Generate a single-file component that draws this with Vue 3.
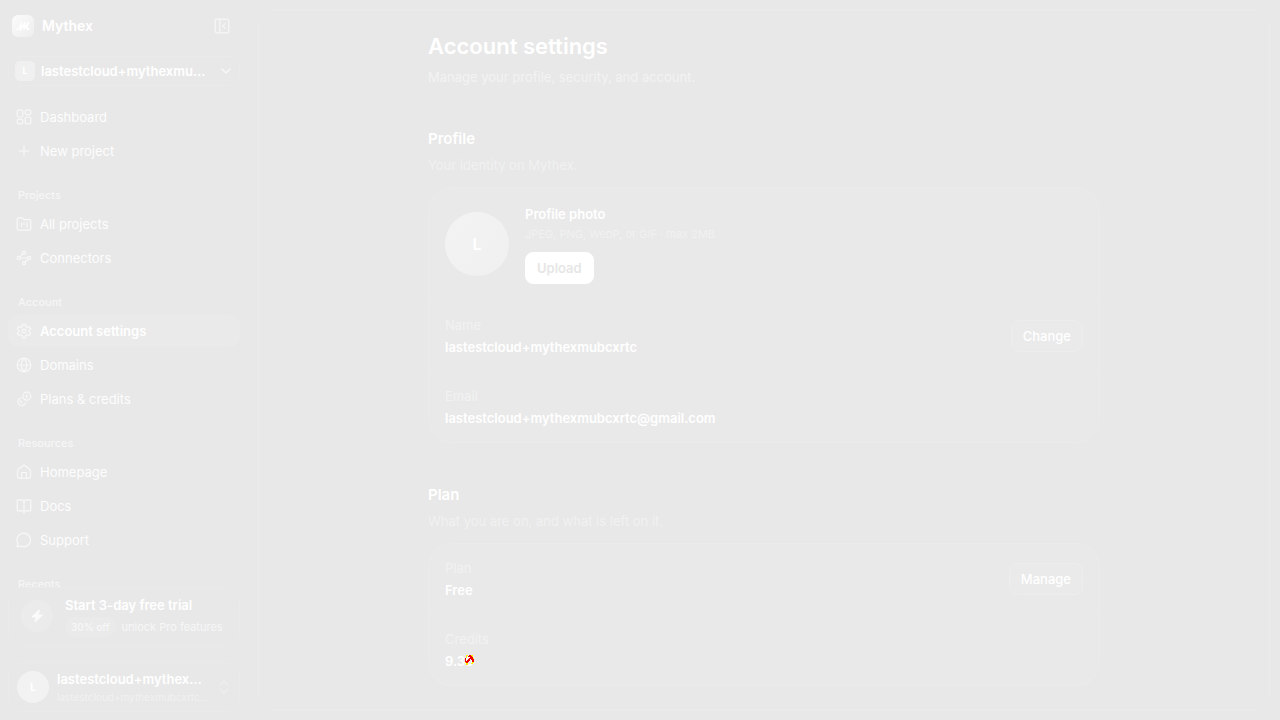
<script setup>
import { ref } from 'vue'

const userName = 'lastestcloud+mythexmubcxrtc'
const userEmail = 'lastestcloud+mythexmubcxrtc@gmail.com'
const current = ref('Account settings')

// Each icon is a list of stroke paths, drawn between 1 and 23 on both axes
const sections = [
  {
    title: '',
    items: [
      {
        label: 'Dashboard',
        icon: [
          'M3 1h5a2 2 0 0 1 2 2v7a2 2 0 0 1-2 2H3a2 2 0 0 1-2-2V3a2 2 0 0 1 2-2z',
          'M16 1h5a2 2 0 0 1 2 2v3a2 2 0 0 1-2 2h-5a2 2 0 0 1-2-2V3a2 2 0 0 1 2-2z',
          'M16 12h5a2 2 0 0 1 2 2v7a2 2 0 0 1-2 2h-5a2 2 0 0 1-2-2v-7a2 2 0 0 1 2-2z',
          'M3 16h5a2 2 0 0 1 2 2v3a2 2 0 0 1-2 2H3a2 2 0 0 1-2-2v-3a2 2 0 0 1 2-2z',
        ],
      },
      { label: 'New project', icon: ['M12 4v16', 'M4 12h16'] },
    ],
  },
  {
    title: 'Projects',
    items: [
      {
        label: 'All projects',
        icon: [
          'M3 22h18a2 2 0 0 0 2-2V7a2 2 0 0 0-2-2h-9l-2-3H3a2 2 0 0 0-2 2v16a2 2 0 0 0 2 2z',
          'M8 10v6',
          'M12 10v3',
          'M17 10v7',
        ],
      },
      {
        label: 'Connectors',
        icon: [
          'M12 1a2.500 2.500 0 1 1 0 5a2.500 2.500 0 0 1 0-5z',
          'M10.200 5.300 5 10.200',
          'M3.500 9.500a2.500 2.500 0 1 1 0 5a2.500 2.500 0 0 1 0-5z',
          'M6 12h12',
          'M20.500 9.500a2.500 2.500 0 1 1 0 5a2.500 2.500 0 0 1 0-5z',
          'M19 13.800 13.800 18.700',
          'M12 18a2.500 2.500 0 1 1 0 5a2.500 2.500 0 0 1 0-5z',
        ],
      },
    ],
  },
  {
    title: 'Account',
    items: [
      {
        label: 'Account settings',
        icon: [
          'M10 1h4l1 3.500 2.500 1.500 3.500-1 2 3.500-2.500 2.500v2l2.500 2.500-2 3.500-3.500-1-2.500 1.500-1 3.500h-4l-1-3.500-2.500-1.500-3.500 1-2-3.500L3.500 13v-2L1 8.500 3 5l3.500 1L9 4.500z',
          'M12 9a3 3 0 1 1 0 6a3 3 0 0 1 0-6z',
        ],
      },
      {
        label: 'Domains',
        icon: [
          'M12 1a11 11 0 1 1 0 22a11 11 0 0 1 0-22z',
          'M12 1c-6 6.500-6 15.500 0 22c6-6.500 6-15.500 0-22',
          'M1 12h22',
        ],
      },
      {
        label: 'Plans & credits',
        icon: [
          'M16.500 1a6.500 6.500 0 1 1 0 13a6.500 6.500 0 0 1 0-13z',
          'M6.500 10a6.500 6.500 0 1 0 8.500 8',
          'M15.500 5.500h1v4.500',
          'M6 14.500l2.500 3.500',
        ],
      },
    ],
  },
  {
    title: 'Resources',
    items: [
      {
        label: 'Homepage',
        icon: [
          'M16 22v-8a1 1 0 0 0-1-1H9a1 1 0 0 0-1 1v8',
          'M1.500 10a3 3 0 0 1 1-2l8-6.500a2.500 2.500 0 0 1 3 0l8 6.500a3 3 0 0 1 1 2v10a2 2 0 0 1-2 2h-17a2 2 0 0 1-2-2z',
        ],
      },
      {
        label: 'Docs',
        icon: [
          'M12 6v17',
          'M2 20a1 1 0 0 1-1-1V3a1 1 0 0 1 1-1h6a4 4 0 0 1 4 4 4 4 0 0 1 4-4h6a1 1 0 0 1 1 1v16a1 1 0 0 1-1 1h-7a3 3 0 0 0-3 2 3 3 0 0 0-3-2z',
        ],
      },
      {
        label: 'Support',
        icon: ['M2 17.500a1.500 1.500 0 0 1 0 1L1 22a1 1 0 0 0 1 1l4-1a2 2 0 0 1 1 0A11 11 0 1 0 2 17.500'],
      },
    ],
  },
  { title: 'Recents', items: [] },
]
</script>

<template>
  <div class="app">
    <aside class="sidebar">
      <div class="brand">
        <svg class="logo" viewBox="0 0 22 22">
          <defs>
            <linearGradient id="logoFill" x1="0" y1="0" x2="1" y2="1">
              <stop offset="0" stop-color="#fbfbfb" />
              <stop offset="1" stop-color="#eeeeee" />
            </linearGradient>
          </defs>
          <rect width="22" height="22" rx="6" fill="url(#logoFill)" />
          <path d="M5 14.500c2 0 3-3 4.500-7L8.500 15 13 7.500 12 14l4.500-6.500c-1 2.500-2 6.500-1 7 .5.200 1-.200 1.500-.8" fill="none" stroke="#fff" stroke-width="1.500" stroke-linecap="round" stroke-linejoin="round" />
        </svg>
        <span class="brand-name">Mythex</span>
        <button class="icon-button" type="button" aria-label="Collapse sidebar">
          <svg class="icon" viewBox="0 0 24 24">
            <rect x="3" y="3" width="18" height="18" rx="2" />
            <path d="M9 3v18" />
            <path d="m16 15-3-3 3-3" />
          </svg>
        </button>
      </div>

      <button class="workspace" type="button">
        <span class="workspace-avatar">L</span>
        <span class="workspace-name">{{ userName }}</span>
        <svg class="chevron" viewBox="0 0 24 24"><path d="m4 8 8 8 8-8" /></svg>
      </button>

      <nav class="nav">
        <div v-for="section in sections" :key="section.title" class="nav-section">
          <h3 v-if="section.title" class="nav-title">{{ section.title }}</h3>
          <a
            v-for="item in section.items"
            :key="item.label"
            href="#"
            class="nav-item"
            :class="{ active: item.label === current }"
            @click.prevent="current = item.label"
          >
            <svg class="icon" viewBox="-1 -1 26 26">
              <path v-for="d in item.icon" :key="d" :d="d" />
            </svg>
            <span>{{ item.label }}</span>
          </a>
        </div>
      </nav>

      <button class="promo" type="button">
        <span class="promo-icon">
          <svg viewBox="0 0 16 16"><path d="M9.500 2 2.800 8.200c-.5.500-.2 1.200.5 1.200h3.200L5.300 13.400c-.2.800.5 1.100 1.100.6l7-6.200c.500-.500.200-1.200-.5-1.200H9.800l1.100-3.900c.2-.8-.7-1.300-1.400-.7z" /></svg>
        </span>
        <span class="promo-text">
          <span class="promo-title">Start 3-day free trial</span>
          <span class="promo-line">
            <span class="badge">30% off</span>
            <span>unlock Pro features</span>
          </span>
        </span>
      </button>

      <button class="user" type="button">
        <span class="user-avatar">L</span>
        <span class="user-text">
          <span class="user-name">{{ userName }}</span>
          <span class="user-email">{{ userEmail }}</span>
        </span>
        <svg class="sorter" viewBox="0 0 24 24">
          <path d="m6 8 6-6 6 6" />
          <path d="m6 16 6 6 6-6" />
        </svg>
      </button>
    </aside>

    <main class="panel">
      <div class="content">
        <header>
          <h1>Account settings</h1>
          <p class="lead">Manage your profile, security, and account.</p>
        </header>

        <section>
          <h2>Profile</h2>
          <p class="hint">Your identity on Mythex.</p>
          <div class="card">
            <div class="photo-row">
              <span class="photo">L</span>
              <div class="photo-info">
                <p class="value">Profile photo</p>
                <p class="formats">JPEG, PNG, WebP, or GIF · max 2MB</p>
                <button class="button primary" type="button">Upload</button>
              </div>
            </div>
            <div class="row">
              <div>
                <p class="label">Name</p>
                <p class="value">{{ userName }}</p>
              </div>
              <button class="button" type="button">Change</button>
            </div>
            <div class="row">
              <div>
                <p class="label">Email</p>
                <p class="value">{{ userEmail }}</p>
              </div>
            </div>
          </div>
        </section>

        <section>
          <h2>Plan</h2>
          <p class="hint">What you are on, and what is left on it.</p>
          <div class="card">
            <div class="row">
              <div>
                <p class="label">Plan</p>
                <p class="value">Free</p>
              </div>
              <button class="button" type="button">Manage</button>
            </div>
            <div class="row">
              <div>
                <p class="label">Credits</p>
                <p class="value credits">
                  9.30
                  <svg class="marker" viewBox="0 0 9 10" shape-rendering="crispEdges">
                    <path fill="#ffee00" d="M1 0h2v1H1zM6 0h2v2H6zM1 1h1v2H1zM0 7h2v1H0zM1 8h2v2H1zM7 7h2v1H7zM6 8h2v1H6zM8 3h1v2H8z" />
                    <path fill="#f00000" d="M4 0h2v1h1v1h1v2h1v3H7V5H6V4H5v2H4v1H3v1H1V7H0V3h1v3h1V5h1V4h1V3h1V2H3V1h1z" />
                  </svg>
                </p>
              </div>
            </div>
          </div>
        </section>
      </div>
    </main>
  </div>
</template>

<style>
body {
  margin: 0;
  background: #e8e8e8;
}
</style>

<style scoped>
.app {
  display: flex;
  height: 100vh;
  font-family: Inter, 'Liberation Sans', sans-serif;
  font-size: 13px;
  line-height: 20px;
  color: #fff;
  background: #e8e8e8;
}

.app * {
  box-sizing: border-box;
}

h1,
h2,
h3,
p {
  margin: 0;
}

button {
  padding: 0;
  border: 0;
  background: none;
  color: inherit;
  font: inherit;
  text-align: left;
  cursor: pointer;
}

/* Sidebar */
.sidebar {
  display: flex;
  flex-direction: column;
  flex: none;
  width: 248px;
  padding: 8px;
}

.brand {
  display: flex;
  align-items: center;
  gap: 8px;
  flex: none;
  height: 36px;
  padding: 0 9px 0 4px;
}

.logo {
  width: 22px;
  height: 22px;
}

.brand-name {
  flex: 1;
  font-size: 14px;
  font-weight: 600;
}

.icon-button {
  display: flex;
}

.icon,
.chevron,
.sorter {
  flex: none;
  width: 16px;
  height: 16px;
  fill: none;
  stroke: #f7f7f7;
  stroke-width: 2;
  stroke-linecap: round;
  stroke-linejoin: round;
}

.icon-button .icon {
  width: 18px;
  height: 18px;
  stroke: #f4f4f4;
}

.workspace {
  display: flex;
  align-items: center;
  gap: 6px;
  flex: none;
  height: 30px;
  margin-top: 12px;
  padding: 0 7px 0 6px;
  border: 1px solid #eaeaea;
  border-radius: 10px;
}

.workspace-avatar {
  width: 20px;
  height: 20px;
  border-radius: 5px;
  background: #f0f0f0;
  font-size: 9px;
  font-weight: 700;
  text-align: center;
}

.workspace-name {
  flex: 1;
  min-width: 0;
  margin-right: 6px;
  overflow: hidden;
  font-weight: 600;
  text-overflow: ellipsis;
  white-space: nowrap;
}

.chevron {
  width: 12px;
  height: 12px;
  stroke-width: 3;
}

/* The last section title runs a little over the promo's edge */
.nav {
  flex: 1;
  min-height: 0;
  margin: 15px 0 -6px;
  overflow: hidden;
}

.nav-section {
  display: flex;
  flex-direction: column;
  gap: 2px;
}

.nav-title {
  margin: 20px 0 3px;
  padding-left: 10px;
  font-size: 11px;
  font-weight: 500;
  line-height: 16px;
  color: #f6f6f6;
}

.nav-item {
  display: flex;
  align-items: center;
  gap: 8px;
  height: 32px;
  padding: 0 8px;
  border-radius: 10px;
  color: #fdfdfd;
  text-decoration: none;
}

.nav-item.active {
  background: #eaeaea;
  color: #fff;
  font-weight: 600;
}

.promo {
  display: flex;
  align-items: center;
  gap: 12px;
  flex: none;
  height: 60px;
  padding: 0 12px 2px;
  border: 1px solid #eaeaea;
  border-radius: 14px;
}

.promo-icon {
  display: flex;
  align-items: center;
  justify-content: center;
  flex: none;
  width: 32px;
  height: 32px;
  border-radius: 50%;
  background: #ebebeb;
}

.promo-icon svg {
  width: 16px;
  height: 16px;
  fill: #fafafa;
}

.promo-text {
  display: flex;
  flex-direction: column;
  gap: 2px;
  white-space: nowrap;
}

.promo-title {
  font-weight: 600;
}

.promo-line {
  display: flex;
  align-items: center;
  gap: 6px;
  font-size: 11px;
  color: #f7f7f7;
}

.badge {
  padding: 0 6px;
  border-radius: 10px;
  background: #eaeaea;
  font-size: 10px;
  font-weight: 500;
}

.user {
  display: flex;
  align-items: center;
  gap: 8px;
  flex: none;
  height: 50px;
  margin-top: 15px;
  padding: 0 8px;
  border: 1px solid #eaeaea;
  border-radius: 12px;
}

.user-avatar {
  flex: none;
  width: 32px;
  height: 32px;
  border-radius: 50%;
  background: #f2f2f2;
  font-size: 11px;
  font-weight: 700;
  line-height: 32px;
  text-align: center;
}

.user-text {
  display: flex;
  flex: 1;
  flex-direction: column;
  min-width: 0;
}

.user-name,
.user-email {
  overflow: hidden;
  text-overflow: ellipsis;
  white-space: nowrap;
}

.user-name {
  font-weight: 600;
}

.user-email {
  font-size: 10px;
  line-height: 16px;
  color: #f1f1f1;
}

.sorter {
  width: 14px;
  height: 14px;
  stroke: #f0f0f0;
}

/* Main panel */
.panel {
  flex: 1;
  min-width: 0;
  margin: 10px;
  padding: 20px 24px 0;
  overflow: hidden;
  border: 1px solid #ebebeb;
  border-radius: 14px;
  box-sizing: border-box;
}

.content {
  display: flex;
  flex-direction: column;
  gap: 40px;
  max-width: 672px;
  margin: 0 auto;
}

h1 {
  font-size: 22px;
  font-weight: 600;
  line-height: 30px;
}

.lead {
  margin-top: 6px;
  color: #f3f3f3;
}

h2 {
  font-size: 15px;
  font-weight: 600;
  line-height: 24px;
}

.hint {
  margin-top: 4px;
  color: #f1f1f1;
}

.card {
  margin-top: 12px;
  border: 1px solid #ebebeb;
  border-radius: 24px;
  background: #e9e9e9;
}

.photo-row,
.row {
  display: flex;
  align-items: center;
  padding: 14px 16px;
}

.photo-row {
  gap: 16px;
  padding: 16px;
}

.row {
  justify-content: space-between;
}

.photo-row + .row,
.row + .row {
  border-top: 1px solid #eaeaea;
}

.photo {
  width: 64px;
  height: 64px;
  border-radius: 50%;
  background: linear-gradient(135deg, #f3f3f3, #f0f0f0);
  font-size: 16px;
  font-weight: 600;
  line-height: 64px;
  text-align: center;
}

.formats {
  margin-bottom: 8px;
  font-size: 11px;
  color: #f1f1f1;
}

.label {
  margin-bottom: 2px;
  color: #f2f2f2;
}

.value {
  font-weight: 600;
}

.credits {
  position: relative;
}

/* Sits over the last digit of the balance */
.marker {
  position: absolute;
  top: 4px;
  left: 20px;
  width: 9px;
  height: 10px;
}

.button {
  height: 32px;
  padding: 0 11px;
  border: 1px solid #ededed;
  border-radius: 8px;
  background: #eaeaea;
  font-weight: 500;
}

.button.primary {
  display: block;
  border-color: #fff;
  background: #fff;
  color: #e6e6e6;
  font-weight: 600;
}
</style>
